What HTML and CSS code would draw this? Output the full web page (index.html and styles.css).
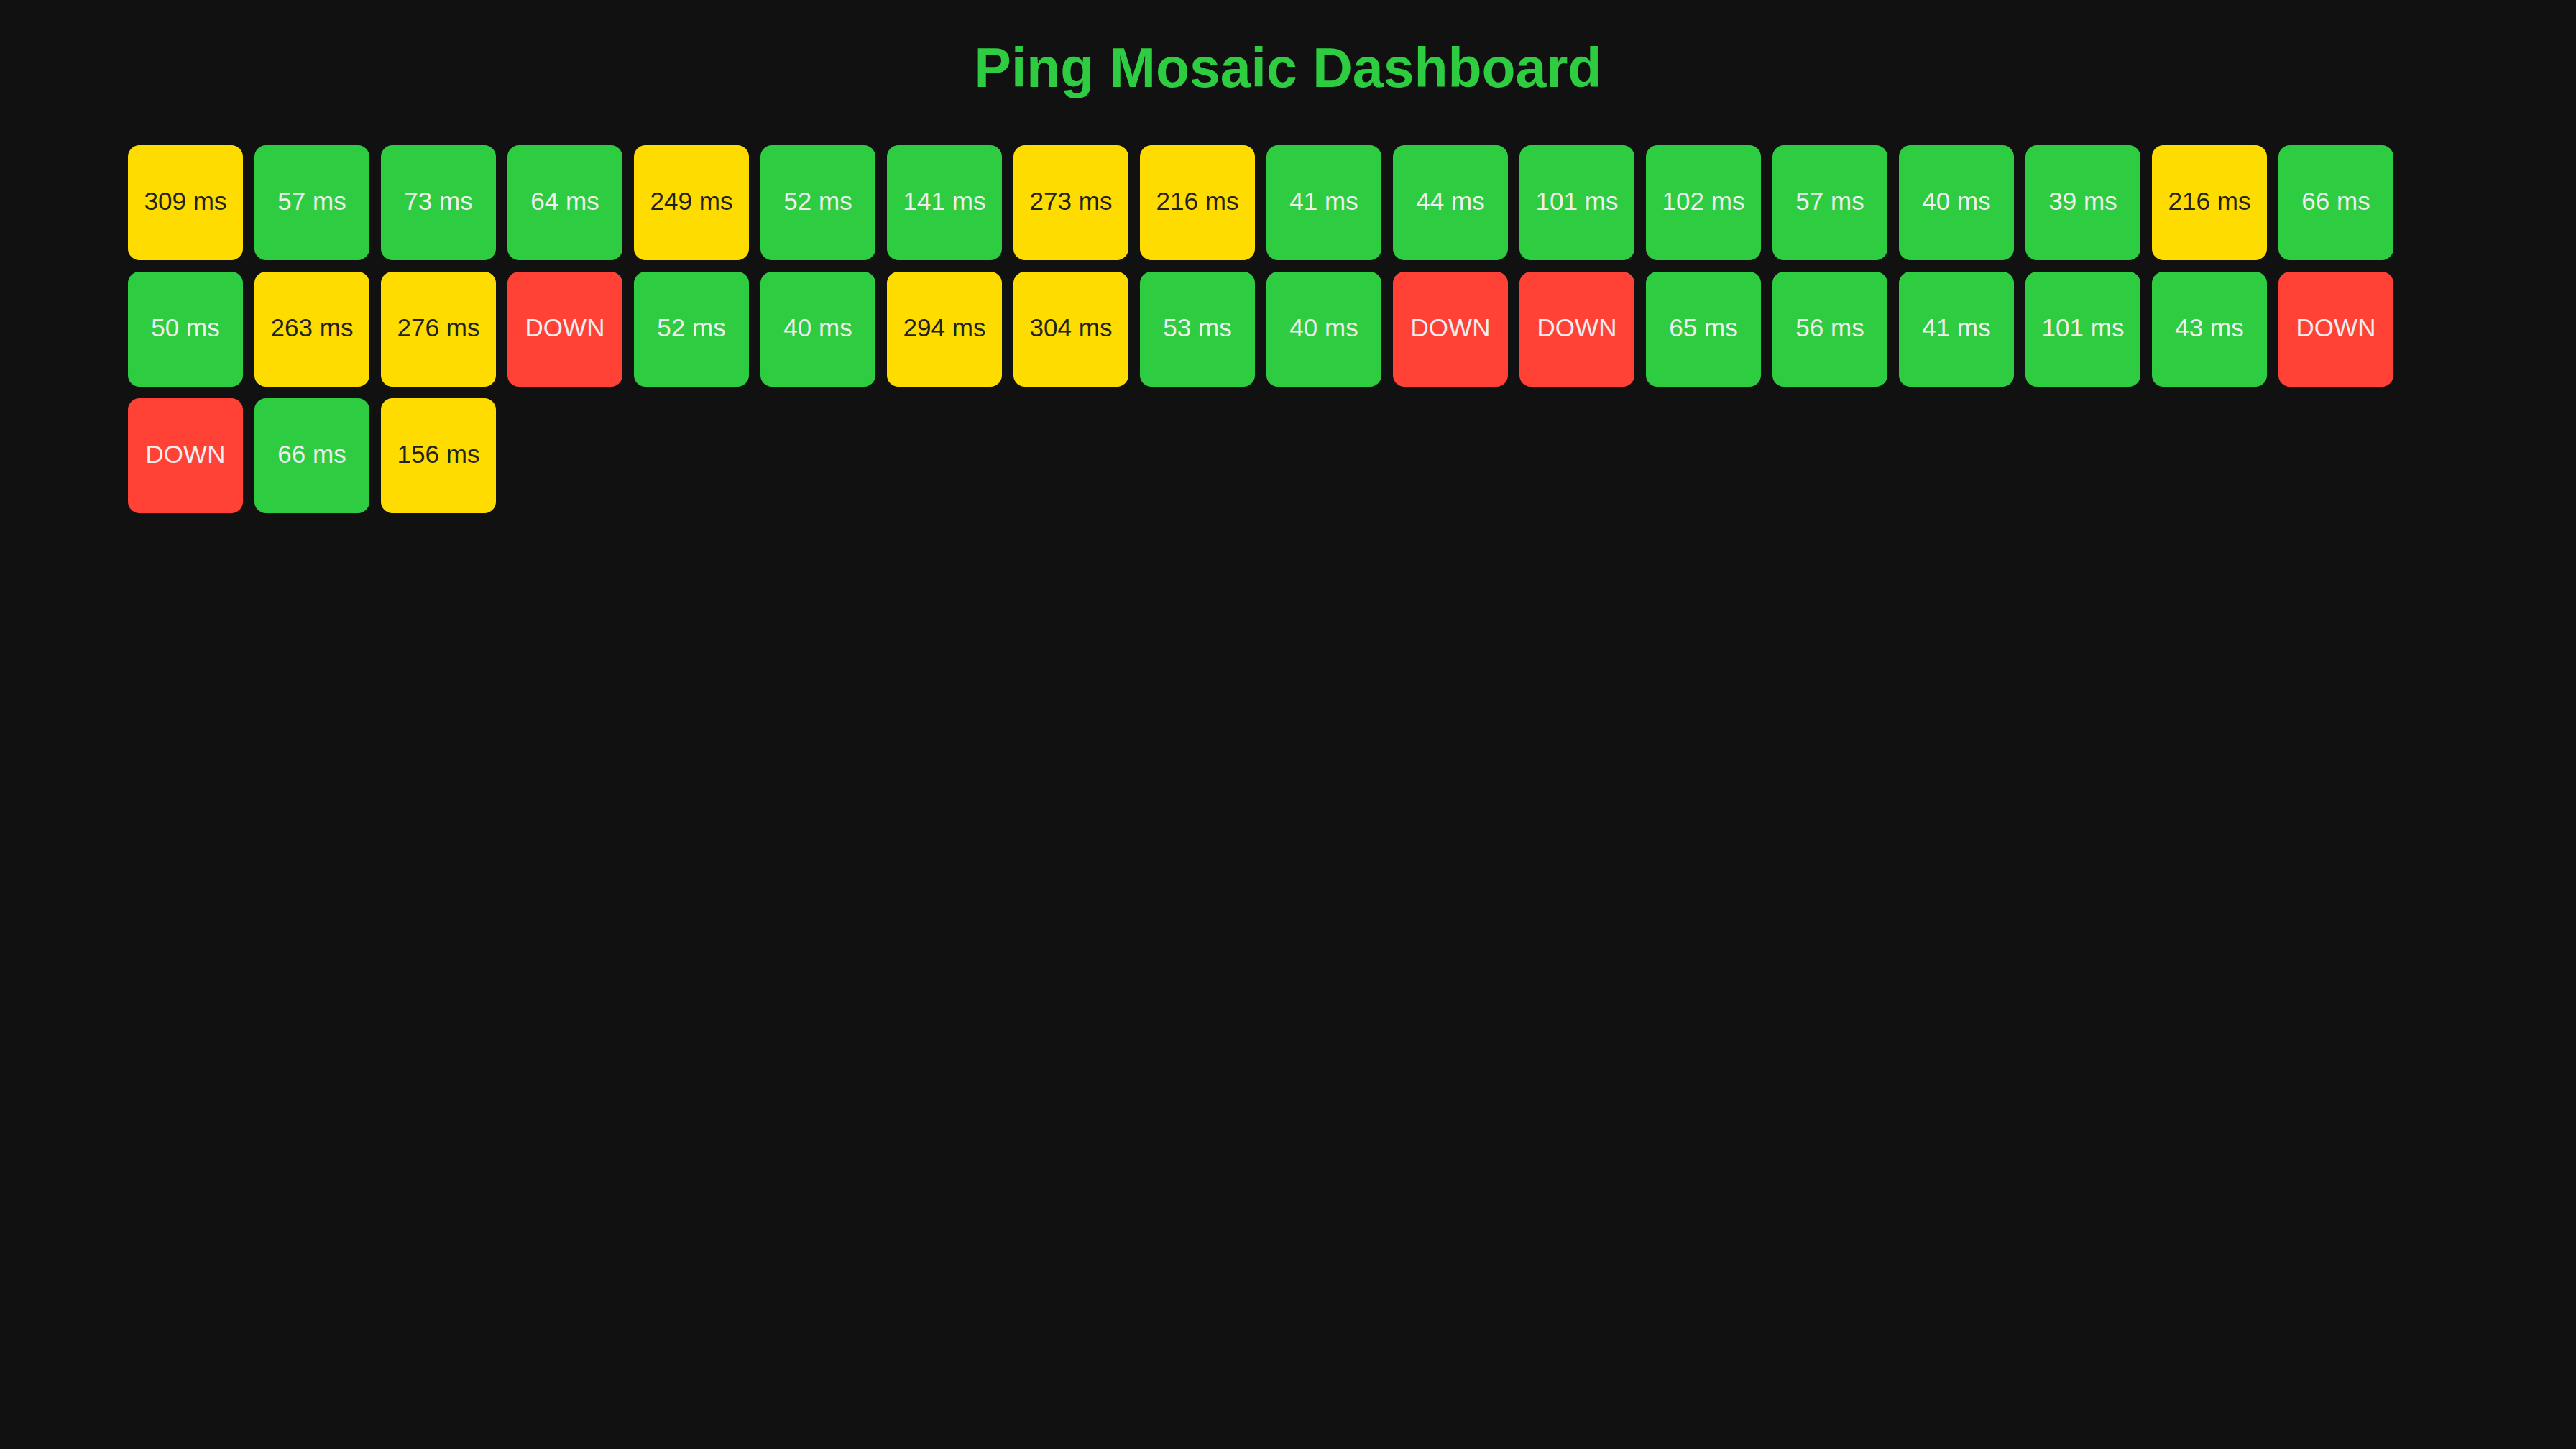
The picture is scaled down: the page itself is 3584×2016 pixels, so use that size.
FILE: index.html
```html
<!DOCTYPE html>
<html lang="en">
<head>
<meta charset="utf-8">
<title>Ping Mosaic Dashboard</title>
<link rel="stylesheet" href="styles.css">
</head>
<body>
<h1 class="title">Ping Mosaic Dashboard</h1>
<div class="mosaic">
  <div class="tile warn">309 ms</div>
  <div class="tile ok">57 ms</div>
  <div class="tile ok">73 ms</div>
  <div class="tile ok">64 ms</div>
  <div class="tile warn">249 ms</div>
  <div class="tile ok">52 ms</div>
  <div class="tile ok">141 ms</div>
  <div class="tile warn">273 ms</div>
  <div class="tile warn">216 ms</div>
  <div class="tile ok">41 ms</div>
  <div class="tile ok">44 ms</div>
  <div class="tile ok">101 ms</div>
  <div class="tile ok">102 ms</div>
  <div class="tile ok">57 ms</div>
  <div class="tile ok">40 ms</div>
  <div class="tile ok">39 ms</div>
  <div class="tile warn">216 ms</div>
  <div class="tile ok">66 ms</div>

  <div class="tile ok">50 ms</div>
  <div class="tile warn">263 ms</div>
  <div class="tile warn">276 ms</div>
  <div class="tile down">DOWN</div>
  <div class="tile ok">52 ms</div>
  <div class="tile ok">40 ms</div>
  <div class="tile warn">294 ms</div>
  <div class="tile warn">304 ms</div>
  <div class="tile ok">53 ms</div>
  <div class="tile ok">40 ms</div>
  <div class="tile down">DOWN</div>
  <div class="tile down">DOWN</div>
  <div class="tile ok">65 ms</div>
  <div class="tile ok">56 ms</div>
  <div class="tile ok">41 ms</div>
  <div class="tile ok">101 ms</div>
  <div class="tile ok">43 ms</div>
  <div class="tile down">DOWN</div>

  <div class="tile down">DOWN</div>
  <div class="tile ok">66 ms</div>
  <div class="tile warn">156 ms</div>
</div>
</body>
</html>
```
FILE: styles.css
```css
html, body {
  margin: 0;
  background: #111111;
}

body {
  padding: 48px 178px;
  font-family: "Liberation Sans", Arial, Helvetica, sans-serif;
  color: #eeeeee;
}

.title {
  margin: 0 0 62px;
  text-align: center;
  font-size: 77px;
  line-height: 92px;
  font-weight: bold;
  color: #2ecc40;
}

.mosaic {
  display: flex;
  flex-wrap: wrap;
  gap: 16px;
}

.tile {
  width: 160px;
  height: 160px;
  box-sizing: border-box;
  padding-bottom: 4px;
  border-radius: 16px;
  display: flex;
  align-items: center;
  justify-content: center;
  font-size: 35px;
  color: #eeeeee;
}

.ok {
  background: #2ecc40;
}

.warn {
  background: #ffdc00;
  color: #222222;
}

.down {
  background: #ff4136;
}
```
